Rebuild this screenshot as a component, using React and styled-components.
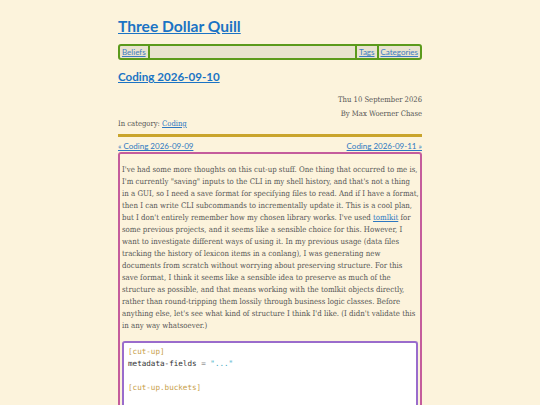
import React from "react";
import styled, { createGlobalStyle } from "styled-components";

const Global = createGlobalStyle`
  html, body { margin: 0; padding: 0; background: #fcf3dc; }
  body { font-family: "DejaVu Serif", serif; }
`;

const Page = styled.div`
  width: 304px;
  margin: 0 auto;
  padding-top: 14px;
`;

const Title = styled.a`
  display: inline-block;
  font-family: Lato, "Noto Sans", sans-serif;
  font-weight: 700;
  font-size: 15.6px;
  color: #1b73c4;
  text-decoration: underline;
  line-height: 24px;
`;

const Nav = styled.nav`
  margin-top: 6px;
  display: flex;
  align-items: stretch;
  border: 2px solid #5b9a1c;
  border-radius: 3px;
  background: #e9e3cf;
  height: 12px;
  font-family: Lato, sans-serif;
  font-size: 8px;
  line-height: 12px;
`;

const NavLink = styled.a`
  color: #3d7cc0;
  text-decoration: underline;
  padding: 0 2px;
  border-right: ${(p) => (p.$sep ? "2px solid #5b9a1c" : "none")};
  border-left: ${(p) => (p.$lsep ? "2px solid #5b9a1c" : "none")};
`;

const Spacer = styled.div`
  flex: 1;
`;

const PostTitle = styled.a`
  display: inline-block;
  margin-top: 9px;
  font-family: Lato, sans-serif;
  font-weight: 700;
  font-size: 11.6px;
  color: #1b73c4;
  text-decoration: underline;
  line-height: 16px;
`;

const Meta = styled.div`
  margin-top: 8px;
  text-align: right;
  font-size: 7.6px;
  font-stretch: condensed;
  line-height: 14px;
  color: #555;
`;

const Category = styled.div`
  font-size: 7.6px;
  font-stretch: condensed;
  color: #555;
  line-height: 12px;
  margin-top: -3px;
`;

const Link = styled.a`
  color: #2d78c2;
  text-decoration: underline;
`;

const Rule = styled.hr`
  border: none;
  height: 3px;
  background: #c9a42c;
  margin: 4px 0 3px;
`;

const PrevNext = styled.div`
  display: flex;
  justify-content: space-between;
  font-family: Lato, sans-serif;
  font-size: 8px;
  line-height: 12px;
`;

const Article = styled.article`
  border: 2px solid #c45c9c;
  border-bottom: none;
  border-radius: 3px 3px 0 0;
  padding: 10px 2px 0;
  min-height: 260px;
`;

const Para = styled.p`
  margin: 0;
  font-size: 7.8px;
  font-stretch: condensed;
  line-height: 12px;
  color: #565656;
  white-space: nowrap;
`;

const Code = styled.pre`
  margin: 9px 0 0 0;
  background: #fff;
  border: 2px solid #9a6ccc;
  border-bottom: none;
  border-radius: 3px 3px 0 0;
  padding: 3px 4px 20px;
  font-family: "DejaVu Sans Mono", monospace;
  font-size: 7.6px;
  line-height: 12px;
  color: #333;
`;

const Section = styled.span`
  color: #c8a04a;
`;
const Op = styled.span`
  color: #999;
`;
const Str = styled.span`
  color: #3aa8c0;
`;

export default function App() {
  return (
    <>
      <Global />
      <Page>
        <Title href="#">Three Dollar Quill</Title>
        <Nav>
          <NavLink href="#" $sep>Beliefs</NavLink>
          <Spacer />
          <NavLink href="#" $lsep $sep>Tags</NavLink>
          <NavLink href="#">Categories</NavLink>
        </Nav>
        <PostTitle href="#">Coding 2026-09-10</PostTitle>
        <Meta>
          Thu 10 September 2026
          <br />
          By Max Woerner Chase
        </Meta>
        <Category>
          In category: <Link href="#">Coding</Link>
        </Category>
        <Rule />
        <PrevNext>
          <Link href="#">« Coding 2026-09-09</Link>
          <Link href="#">Coding 2026-09-11 »</Link>
        </PrevNext>
        <Article>
          <Para>
            I've had some more thoughts on this cut-up stuff. One thing that occurred to me is,<br />
            I'm currently "saving" inputs to the CLI in my shell history, and that's not a thing<br />
            in a GUI, so I need a save format for specifying files to read. And if I have a format,<br />
            then I can write CLI subcommands to incrementally update it. This is a cool plan,<br />
            but I don't entirely remember how my chosen library works. I've used{" "}
            <Link href="#">tomlkit</Link> for<br />
            some previous projects, and it seems like a sensible choice for this. However, I<br />
            want to investigate different ways of using it. In my previous usage (data files<br />
            tracking the history of lexicon items in a conlang), I was generating new<br />
            documents from scratch without worrying about preserving structure. For this<br />
            save format, I think it seems like a sensible idea to preserve as much of the<br />
            structure as possible, and that means working with the tomlkit objects directly,<br />
            rather than round-tripping them lossily through business logic classes. Before<br />
            anything else, let's see what kind of structure I think I'd like. (I didn't validate this<br />
            in any way whatsoever.)
          </Para>
          <Code>
            <Section>[cut-up]</Section>
            {"\n"}metadata-fields <Op>=</Op> <Str>"..."</Str>
            {"\n\n"}
            <Section>[cut-up.buckets]</Section>
          </Code>
        </Article>
      </Page>
    </>
  );
}
